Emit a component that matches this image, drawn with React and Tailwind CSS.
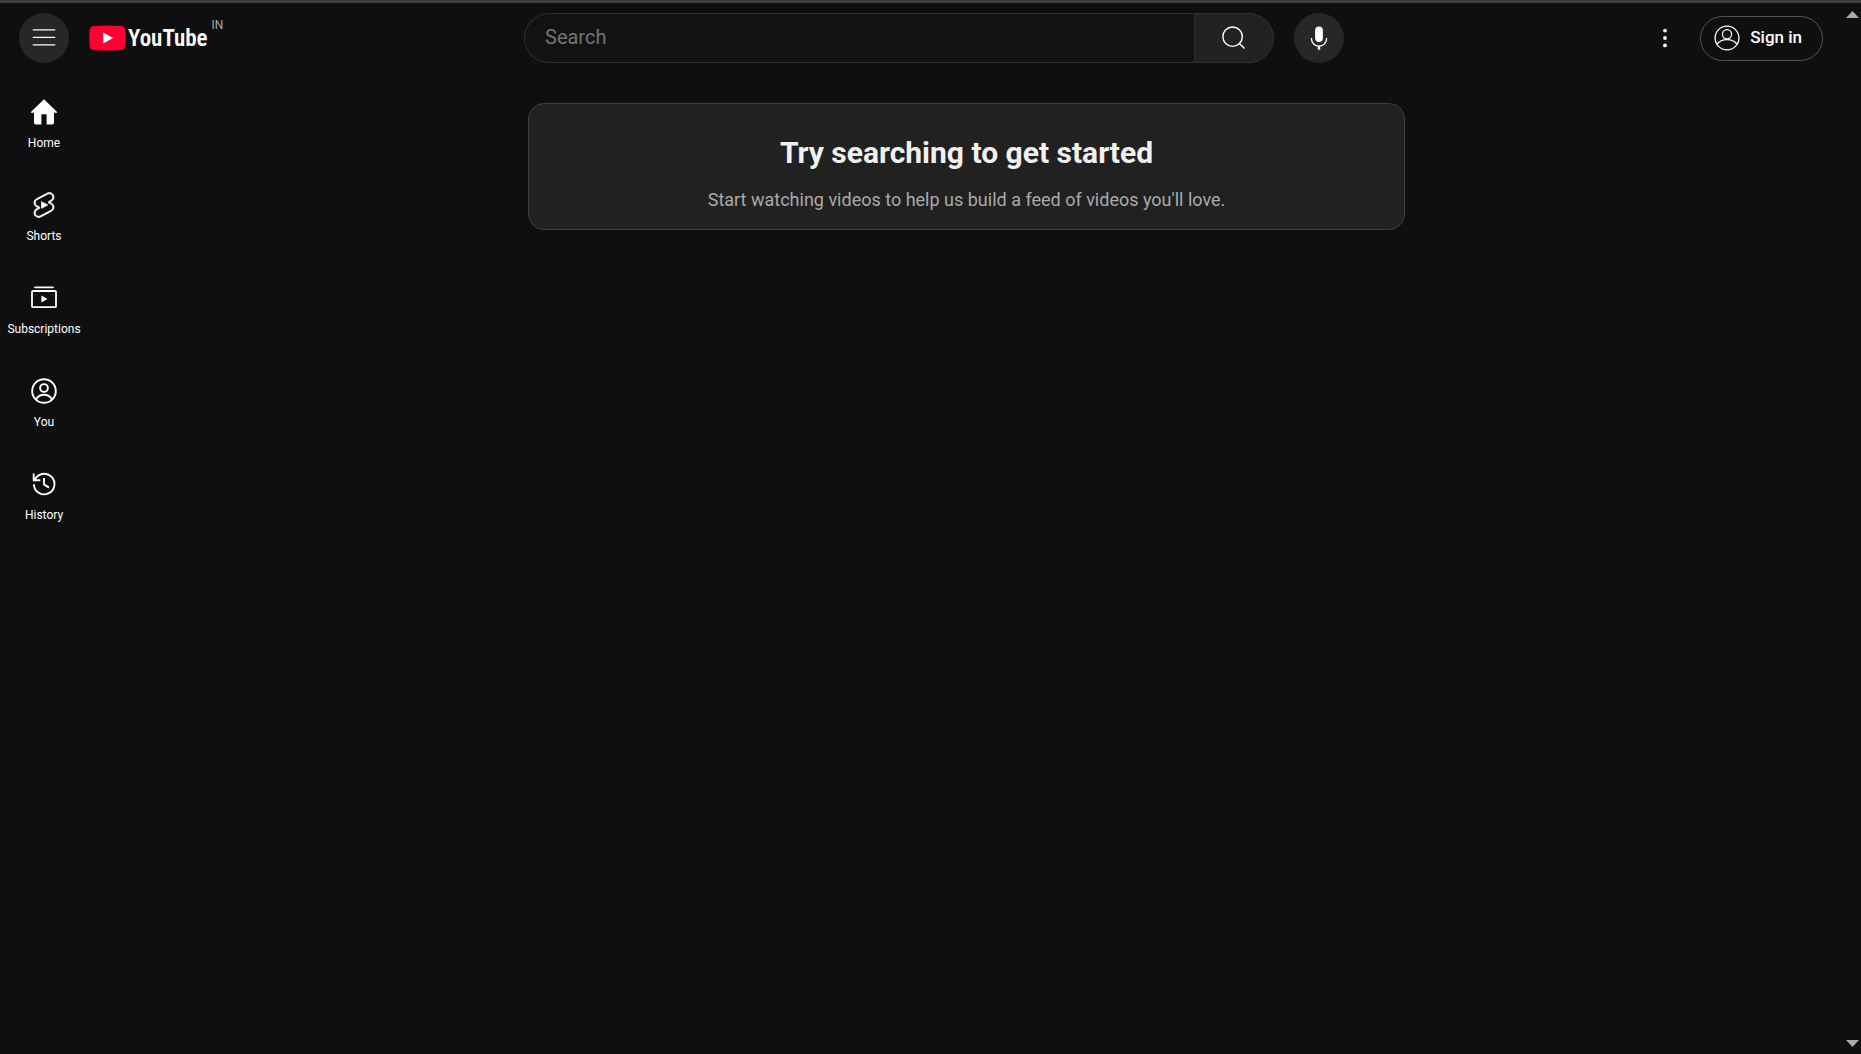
import React, { useState } from "react";

const HomeIcon = () => (
  <svg viewBox="0 0 30 30" className="size-[30px]" fill="currentColor" aria-hidden="true">
    <path d="M15 2.3 L1.9 15 V15.8 H5 V25.4 Q5 27.4 7 27.4 H12.4 V17.3 H17.6 V27.4 H23 Q25 27.4 25 25.4 V15.8 H28.1 V15 Z" />
  </svg>
);

const ShortsIcon = () => (
  <svg viewBox="0 0 24 24" className="size-[30px]" fill="currentColor" aria-hidden="true">
    <path
      stroke="currentColor"
      strokeWidth="0.6"
      d="M10 14.65v-5.3L15 12l-5 2.65zm7.77-4.33-1.2-.5L18 9.06c1.84-.96 2.53-3.23 1.56-5.06s-3.24-2.53-5.07-1.56L6 6.94c-1.29.68-2.07 2.04-2 3.49.07 1.42.93 2.67 2.22 3.25.03.01 1.2.5 1.2.5L6 14.93c-1.83.97-2.53 3.24-1.56 5.07.97 1.83 3.24 2.53 5.07 1.56l8.5-4.5c1.29-.68 2.06-2.04 1.99-3.49-.07-1.42-.94-2.68-2.23-3.25zm-.23 5.86-8.5 4.5c-1.34.71-3.01.2-3.72-1.14-.71-1.34-.2-3.01 1.14-3.72l2.04-1.08v-1.21l-.69-.28-1.11-.46c-.99-.41-1.65-1.35-1.7-2.41-.05-1.06.52-2.06 1.46-2.56l8.5-4.5c1.34-.71 3.01-.2 3.72 1.14.71 1.34.2 3.01-1.14 3.72L15.5 9.26v1.21l1.8.74c.99.41 1.65 1.35 1.7 2.41.05 1.06-.52 2.06-1.46 2.56z"
    />
  </svg>
);

const SubscriptionsIcon = () => (
  <svg viewBox="0 0 30 30" className="size-[30px]" fill="none" stroke="currentColor" strokeWidth="1.8" aria-hidden="true">
    <path d="M6 4.3h18" strokeLinecap="round" />
    <rect x="3" y="8" width="24" height="16.2" rx="1" />
    <path d="M12.4 12.4v7l6-3.5z" fill="currentColor" stroke="none" />
  </svg>
);

const UserIcon = () => (
  <svg viewBox="0 0 30 30" className="size-[30px]" fill="none" stroke="currentColor" strokeWidth="1.9" aria-hidden="true">
    <circle cx="15" cy="15" r="11.8" />
    <circle cx="15" cy="12" r="3.9" />
    <path d="M7 23.4Q9.8 18.8 15 18.8T23 23.4" />
  </svg>
);

const AccountIcon = () => (
  <svg viewBox="0 0 30 30" className="size-[30px]" fill="none" stroke="currentColor" strokeWidth="1.3" aria-hidden="true">
    <circle cx="15" cy="15" r="11.9" />
    <circle cx="15" cy="11.3" r="4.6" />
    <path d="M5 21.2Q8.4 16.6 15 16.6T25 21.2" />
  </svg>
);

const HistoryIcon = () => (
  <svg viewBox="0 0 30 30" className="size-[30px]" fill="none" stroke="currentColor" strokeWidth="1.9" aria-hidden="true">
    <path d="M4.9 15.2A10.3 10.3 0 1 0 5.6 11.3" />
    <path d="M4.7 4.6v6.7h6.6" />
    <path d="M15 9v6.4l5 3.2" />
  </svg>
);

const navItems = [
  { label: "Home", icon: <HomeIcon /> },
  { label: "Shorts", icon: <ShortsIcon /> },
  { label: "Subscriptions", icon: <SubscriptionsIcon /> },
  { label: "You", icon: <UserIcon /> },
  { label: "History", icon: <HistoryIcon /> },
];

const Header = () => {
  const [query, setQuery] = useState("");

  const handleSubmit = (e) => {
    e.preventDefault();
  };

  return (
    <header className="flex h-[70px] items-center pl-[19px] pr-5 text-white">
      <div className="flex flex-1 items-center gap-5">
        <button aria-label="Guide" className="flex size-[50px] items-center justify-center rounded-full bg-[#272727]">
          <svg viewBox="0 0 24 24" className="size-[30px]" fill="currentColor" aria-hidden="true">
            <path d="M21 6H3V5h18v1zm0 5H3v1h18v-1zm0 6H3v1h18v-1z" />
          </svg>
        </button>
        <a href="/" className="flex h-[38px] items-center">
          <svg viewBox="0 0 37 26" className="h-[26px] w-[37px]" aria-hidden="true">
            <path
              fill="#ff0033"
              d="M5 .9Q11 .4 18.5 .4T32 .9Q35.8 1.2 36.3 5Q36.7 8.5 36.7 13T36.3 21Q35.8 24.8 32 25.1Q26 25.6 18.5 25.6T5 25.1Q1.2 24.8 .7 21Q.3 17.5 .3 13T.7 5Q1.2 1.2 5 .9Z"
            />
            <path fill="#fff" d="M14.3 7.4v11.2l9.8-5.6z" />
          </svg>
          <span className="pt-0.5 pl-0.5 font-['Roboto_Condensed','Liberation_Sans_Narrow',sans-serif] text-[23px] leading-7 font-semibold">
            YouTube
          </span>
          <span className="self-start pl-1 text-[12px] leading-3 text-[#aaa]">IN</span>
        </a>
      </div>

      <div className="flex w-[846px] items-center gap-5 pl-[26px]">
        <form onSubmit={handleSubmit} className="flex h-[50px] flex-1">
          <input
            type="text"
            aria-label="Search"
            placeholder="Search"
            value={query}
            onChange={(e) => setQuery(e.target.value)}
            className="min-w-0 flex-1 rounded-l-full border border-r-0 border-[#303030] bg-[#121212] px-5 pb-0.5 text-[20px] outline-none placeholder:text-[#757575]"
          />
          <button
            aria-label="Submit search"
            className="flex w-20 items-center justify-center rounded-r-full border border-[#303030] bg-[#222222]"
          >
            <svg viewBox="0 0 30 30" className="size-[30px]" fill="none" stroke="currentColor" strokeWidth="1.4" aria-hidden="true">
              <circle cx="13.6" cy="13.7" r="9.7" />
              <path d="M20.4 20.5l5.1 5.1" />
            </svg>
          </button>
        </form>
        <button aria-label="Search with your voice" className="flex size-[50px] items-center justify-center rounded-full bg-[#272727]">
          <svg viewBox="0 0 30 30" className="size-[30px]" fill="currentColor" aria-hidden="true">
            <rect x="11.1" y="3.5" width="7.8" height="15.5" rx="3.9" />
            <path d="M7.4 15v.6a7.6 7.6 0 0 0 15.2 0V15" fill="none" stroke="currentColor" strokeWidth="1.3" />
            <path d="M13.8 23h2.4v3.8h-2.4z" />
          </svg>
        </button>
      </div>

      <div className="flex flex-1 items-center justify-end gap-5">
        <button aria-label="Settings" className="flex size-[30px] items-center justify-center">
          <svg viewBox="0 0 30 30" className="size-[30px]" fill="currentColor" aria-hidden="true">
            <circle cx="15" cy="7.6" r="1.9" />
            <circle cx="15" cy="15" r="1.9" />
            <circle cx="15" cy="22.4" r="1.9" />
          </svg>
        </button>
        <a
          href="/signin"
          className="flex h-[45px] items-center gap-2 rounded-full border border-[#535353] pl-[11px] pr-5 text-[17px] font-medium"
        >
          <AccountIcon />
          Sign in
        </a>
      </div>
    </header>
  );
};

const Sidebar = () => (
  <nav className="w-22 shrink-0 pt-1 text-white">
    {navItems.map((item) => (
      <a key={item.label} href={`#${item.label.toLowerCase()}`} className="flex flex-col items-center pt-5 pb-[18px]">
        {item.icon}
        <span className="mt-2 text-[12px] leading-[17px]">{item.label}</span>
      </a>
    ))}
  </nav>
);

const ScrollRail = () => (
  <div className="flex w-[18px] flex-col items-center justify-between pt-2 pb-[7px] text-[#aaa]" aria-hidden="true">
    <svg viewBox="0 0 13 7" className="h-[7px] w-[13px]" fill="currentColor">
      <path d="M0 7L6.5 0L13 7z" />
    </svg>
    <svg viewBox="0 0 13 7" className="h-[7px] w-[13px]" fill="currentColor">
      <path d="M0 0L6.5 7L13 0z" />
    </svg>
  </div>
);

const App = () => {
  return (
    <div className="flex min-h-screen flex-col border-t-[3px] border-[#3f3f3f] bg-[#0f0f0f] font-['Roboto',sans-serif] text-[#f1f1f1]">
      <div className="flex flex-1">
        <div className="flex min-w-0 flex-1 flex-col">
          <Header />
          <div className="flex flex-1">
            <Sidebar />
            <main className="flex-1 pt-[30px] pl-0.5">
              <section className="mx-auto w-full max-w-[877px] rounded-2xl border border-[#3f3f3f] bg-[#212121] px-6 pt-[29px] pb-4 text-center">
                <h1 className="text-[30px] leading-10 font-bold">Try searching to get started</h1>
                <p className="mt-[13px] text-[18px] leading-[27px] text-[#aaa]">
                  Start watching videos to help us build a feed of videos you'll love.
                </p>
              </section>
            </main>
          </div>
        </div>
        <ScrollRail />
      </div>
    </div>
  );
};

export default App;
